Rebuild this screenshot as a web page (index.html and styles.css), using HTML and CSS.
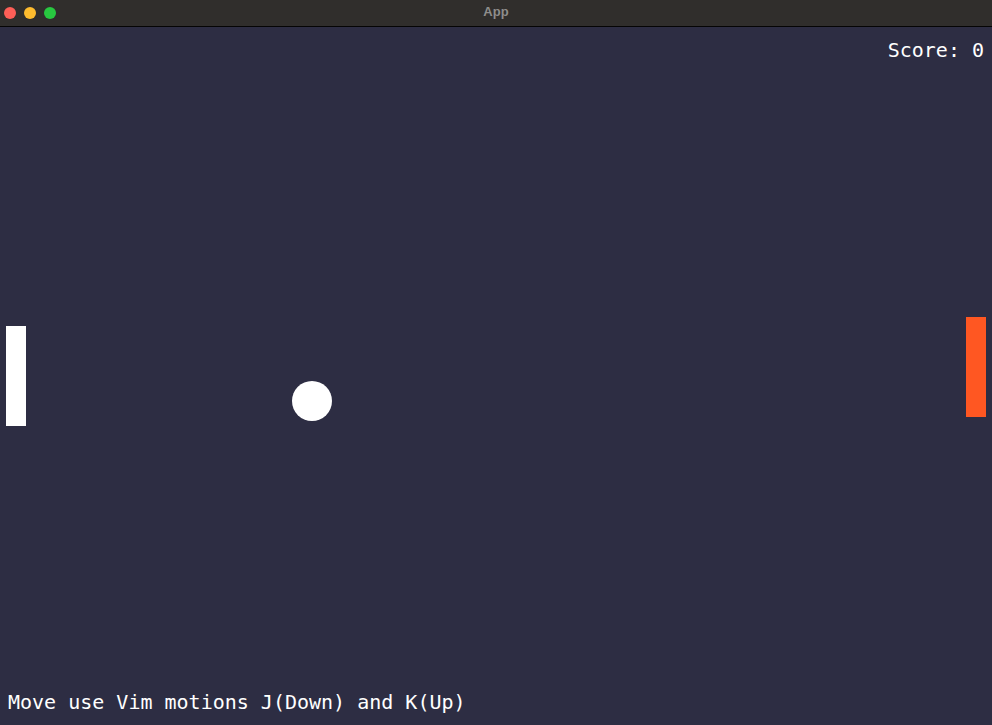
FILE: index.html
```html
<!DOCTYPE html>
<html>
<head>
<meta charset="utf-8">
<link rel="stylesheet" href="styles.css">
</head>
<body>
<div class="window">
  <div class="titlebar">
    <div class="lights">
      <span class="light red"></span>
      <span class="light yellow"></span>
      <span class="light green"></span>
    </div>
    <div class="title">App</div>
  </div>
  <div class="game">
    <div class="score">Score: 0</div>
    <div class="paddle left"></div>
    <div class="paddle right"></div>
    <div class="ball"></div>
    <div class="help">Move use Vim motions J(Down) and K(Up)</div>
  </div>
</div>
</body>
</html>
```
FILE: styles.css
```css
html, body {
  margin: 0;
  padding: 0;
  width: 992px;
  height: 725px;
  overflow: hidden;
  background: #2d2d43;
}
.window {
  display: flex;
  flex-direction: column;
  width: 992px;
  height: 725px;
}
.titlebar {
  position: relative;
  height: 26px;
  flex: 0 0 26px;
  background: #302e2c;
  border-bottom: 1px solid #050505;
  display: flex;
  align-items: center;
}
.lights {
  display: flex;
  gap: 8px;
  padding-left: 4px;
}
.light {
  width: 12px;
  height: 12px;
  border-radius: 50%;
  display: block;
}
.red { background: #fe5f57; }
.yellow { background: #febc2e; }
.green { background: #28c840; }
.title {
  position: absolute;
  left: 0;
  right: 0;
  top: 0;
  height: 26px;
  line-height: 24px;
  text-align: center;
  font-family: "Liberation Sans", Arial, sans-serif;
  font-weight: bold;
  font-size: 13px;
  color: #8e8d8b;
}
.game {
  position: relative;
  flex: 1;
  display: flex;
  flex-direction: column;
  justify-content: space-between;
  background: #2d2d43;
  font-family: "DejaVu Sans Mono", monospace;
  font-size: 20px;
  color: #ffffff;
}
.score {
  align-self: flex-end;
  padding: 11px 8px 0 0;
}
.help {
  padding: 0 0 11px 8px;
}
.paddle {
  position: absolute;
  width: 20px;
  height: 100px;
}
.paddle.left {
  left: 6px;
  top: 299px;
  background: #ffffff;
}
.paddle.right {
  left: 966px;
  top: 290px;
  background: #ff5722;
}
.ball {
  position: absolute;
  left: 292px;
  top: 354px;
  width: 40px;
  height: 40px;
  border-radius: 50%;
  background: #ffffff;
}
```
